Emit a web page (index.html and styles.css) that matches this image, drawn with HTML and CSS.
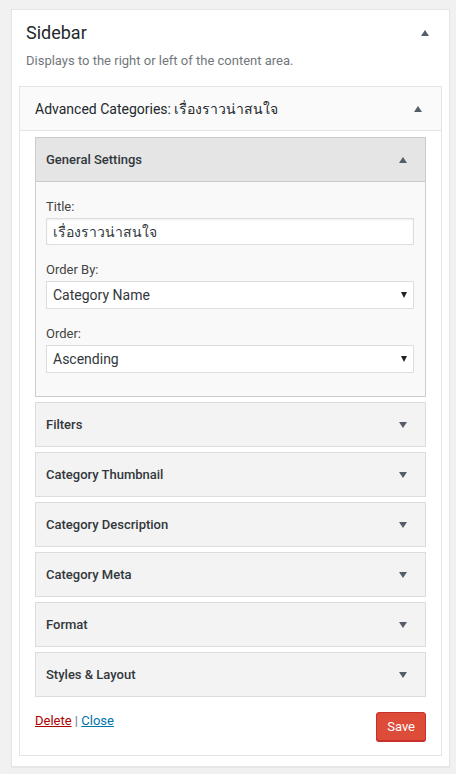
FILE: index.html
```html
<!DOCTYPE html>
<html>
<head>
    <title>Sidebar widget</title>
    <link rel="stylesheet" href="styles.css">
</head>
<body>

<div class="area">
    <div class="area-head">
        <h2 class="area-title">Sidebar</h2>
        <span class="arrow up"></span>
    </div>
    <p class="area-desc">Displays to the right or left of the content area.</p>

    <div class="widget">
        <div class="widget-top">
            <span class="widget-title">Advanced Categories: เรื่องราวน่าสนใจ</span>
            <span class="arrow up"></span>
        </div>

        <div class="widget-inside">
            <div class="section open">
                <div class="section-head">
                    <span>General Settings</span>
                    <span class="arrow up"></span>
                </div>
                <div class="section-body">
                    <label class="field-label">Title:</label>
                    <input class="field" type="text" value="เรื่องราวน่าสนใจ">

                    <label class="field-label">Order By:</label>
                    <div class="select">
                        <span>Category Name</span>
                        <span class="arrow down"></span>
                    </div>

                    <label class="field-label">Order:</label>
                    <div class="select">
                        <span>Ascending</span>
                        <span class="arrow down"></span>
                    </div>
                </div>
            </div>

            <div class="section">
                <div class="section-head"><span>Filters</span><span class="arrow down"></span></div>
            </div>
            <div class="section">
                <div class="section-head"><span>Category Thumbnail</span><span class="arrow down"></span></div>
            </div>
            <div class="section">
                <div class="section-head"><span>Category Description</span><span class="arrow down"></span></div>
            </div>
            <div class="section">
                <div class="section-head"><span>Category Meta</span><span class="arrow down"></span></div>
            </div>
            <div class="section">
                <div class="section-head"><span>Format</span><span class="arrow down"></span></div>
            </div>
            <div class="section">
                <div class="section-head"><span>Styles &amp; Layout</span><span class="arrow down"></span></div>
            </div>

            <div class="widget-control">
                <div class="links">
                    <a href="#" class="delete">Delete</a> | <a href="#" class="close">Close</a>
                </div>
                <button class="save">Save</button>
            </div>
        </div>
    </div>
</div>

</body>
</html>
```

FILE: styles.css
```css
body {
    font-family: Roboto, sans-serif;
    font-size: 13px;
    color: #444;
    background-color: #f1f1f1;
    margin: 0;
    padding: 9px 6px 8px 11px;
}

.area {
    background-color: #fff;
    border: 1px solid #e5e5e5;
    box-shadow: 0 1px 1px rgba(0, 0, 0, 0.04);
    padding: 0 7px 10px 7px;
}

.area-head {
    display: flex;
    justify-content: space-between;
    align-items: flex-start;
    padding: 8px 13px 0 7px;
}

.area-title {
    margin: 0;
    font-size: 18px;
    font-weight: normal;
    line-height: 30px;
    color: #23282d;
}

.area-head .arrow {
    margin-top: 12px;
}

.area-desc {
    margin: 4px 0 0 7px;
    line-height: 18px;
    color: #72777c;
    font-size: 13px;
}

.widget {
    margin-top: 16px;
    border: 1px solid #e5e5e5;
    background-color: #fff;
}

.widget-top {
    display: flex;
    justify-content: space-between;
    align-items: center;
    height: 43px;
    padding: 0 19px 0 15px;
    background-color: #fafafa;
    border-bottom: 1px solid #e5e5e5;
}

.widget-title {
    font-size: 14px;
    color: #23282d;
}

.widget-inside {
    padding: 6px 15px 0 15px;
}

.section {
    border: 1px solid #dcdcdc;
    background-color: #f3f3f3;
    margin-bottom: 5px;
}

.section-head {
    display: flex;
    justify-content: space-between;
    align-items: center;
    height: 43px;
    padding: 0 18px 0 10px;
    font-weight: 500;
    color: #32373c;
}

.section.open {
    border-color: #ccc;
}

.section.open .section-head {
    background-color: #e5e5e5;
    border-bottom: 1px solid #ccc;
}

.section-body {
    background-color: #f9f9f9;
    padding: 16px 11px 23px 10px;
}

.field-label {
    display: block;
    line-height: 18px;
    margin-bottom: 2px;
    color: #444;
}

.field {
    display: block;
    box-sizing: border-box;
    width: 100%;
    height: 27px;
    margin: 0 0 16px 0;
    padding: 0 6px;
    border: 1px solid #ddd;
    background-color: #fff;
    font-family: inherit;
    font-size: 14px;
    color: #32373c;
    box-shadow: inset 0 1px 2px rgba(0, 0, 0, 0.07);
}

.select {
    display: flex;
    justify-content: space-between;
    align-items: center;
    box-sizing: border-box;
    height: 28px;
    margin-bottom: 16px;
    padding: 0 6px;
    border: 1px solid #ddd;
    background-color: #fff;
    font-size: 14px;
    color: #32373c;
}

.section-body .select:last-child {
    margin-bottom: 0;
}

.arrow {
    width: 0;
    height: 0;
    border-left: 4px solid transparent;
    border-right: 4px solid transparent;
}

.arrow.up {
    border-bottom: 6px solid #555d66;
}

.arrow.down {
    border-top: 6px solid #555d66;
}

.select .arrow.down {
    border-left-width: 3px;
    border-right-width: 3px;
    border-top-color: #222;
}

.widget-control {
    display: flex;
    justify-content: space-between;
    align-items: flex-start;
    padding: 10px 0 14px 0;
}

.links {
    margin-top: 1px;
    color: #72777c;
}

.links a {
    text-decoration: underline;
}

.delete {
    color: #a00;
}

.close {
    color: #0073aa;
}

.save {
    font-family: inherit;
    font-size: 13px;
    color: #fff;
    background-color: #dd4b39;
    border: 1px solid #c9302c;
    border-radius: 3px;
    height: 29px;
    padding: 0 10px;
    box-shadow: 0 1px 0 #c9302c;
}
```
